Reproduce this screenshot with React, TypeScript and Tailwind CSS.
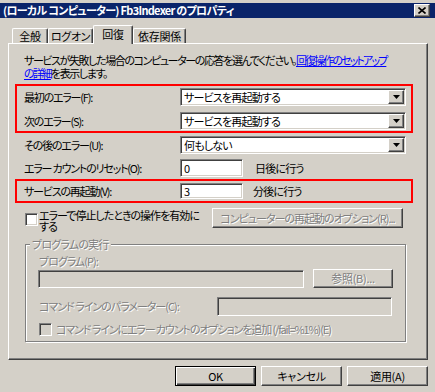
import React from "react";

const raised =
  "border border-white border-r-[#404040] border-b-[#404040] shadow-[inset_-1px_-1px_0_#808080]";
const sunken =
  "border border-[#808080] border-r-white border-b-white shadow-[inset_1px_1px_0_#404040,inset_-1px_-1px_0_#d4d0c8]";
const dim = "text-[#808080] [text-shadow:1px_1px_0_#fff]";
const lbl = "w-[156px] whitespace-nowrap tracking-[-1.2px]";

const Combo = ({ value }: { value: string }) => (
  <div className={`${sunken} bg-white w-[226px] h-[18px] flex items-center justify-between pl-[3px] pr-[1px]`}>
    <span>{value}</span>
    <div className={`${raised} bg-[#d4d0c8] w-[16px] h-[14px] flex items-center justify-center`}>
      <svg width="7" height="4" viewBox="0 0 7 4">
        <path d="M0 0h7L3.5 4z" fill="#000" />
      </svg>
    </div>
  </div>
);

const Field = ({ value, className = "" }: { value?: string; className?: string }) => (
  <div className={`${sunken} flex items-center pl-[3px] ${className}`}>{value}</div>
);

const Check = ({ disabled }: { disabled?: boolean }) => (
  <div className={`${sunken} w-[13px] h-[13px] shrink-0 ${disabled ? "bg-[#d4d0c8]" : "bg-white"}`} />
);

const Tab = ({ label, active, w }: { label: string; active?: boolean; w: string }) => (
  <div
    className={`${w} flex items-center justify-center whitespace-nowrap border-l border-t border-white border-r border-r-[#404040] rounded-t-[2px] shadow-[inset_-1px_0_0_#808080] bg-[#d4d0c8] ${
      active ? "h-[19px] relative z-10 -mb-[1px] pb-[2px]" : "h-[15px]"
    }`}
  >
    {label}
  </div>
);

export default function App() {
  return (
    <div className="w-[435px] h-[392px] bg-[#d4d0c8] overflow-hidden text-[11px] leading-[13px] tracking-[-0.8px] text-black font-['Noto_Sans_CJK_JP',sans-serif] [font-feature-settings:'palt']">
      <div className="pt-[3px]">
        <div className="h-[15px] bg-[#0a246a] flex items-center justify-between pl-[3px] pr-[5px]">
          <span className="text-white font-bold tracking-[-0.7px]">(ローカル コンピューター) Fb3Indexer のプロパティ</span>
          <div className={`${raised} bg-[#d4d0c8] w-[16px] h-[13px] flex items-center justify-center`}>
            <svg width="8" height="7" viewBox="0 0 8 7">
              <path d="M0.5 0.5l7 6M7.5 0.5l-7 6" stroke="#000" strokeWidth="1.6" />
            </svg>
          </div>
        </div>
      </div>

      <div className="mt-[7px] pl-[12px] flex items-end h-[18px] tracking-[-0.3px]">
        <Tab label="全般" w="w-[36px]" />
        <Tab label="ログオン" w="w-[45px]" />
        <Tab label="回復" w="w-[40px]" active />
        <Tab label="依存関係" w="w-[53px]" />
      </div>

      <div className="ml-[8px] w-[420px] h-[317px] border border-white border-r-[#404040] border-b-[#404040] shadow-[inset_-1px_-1px_0_#808080] flex flex-col">
        <p className="mt-[10px] pl-[15px] whitespace-nowrap tracking-[-1.4px]">
          サービスが失敗した場合のコンピューターの応答を選んでください。
          <span className="text-[#0000ff] underline tracking-[-1.9px]">
            回復操作のセットアップ
            <br />
            の詳細
          </span>
          を表示します。
        </p>

        <div className="mt-[4px] ml-[6px] w-[398px] border-2 border-[#ff0000] pt-[2px] pb-[1px] pl-[7px] flex flex-col gap-[6px]">
          <div className="flex items-center">
            <span className={lbl}>最初のエラー(F):</span>
            <Combo value="サービスを再起動する" />
          </div>
          <div className="flex items-center">
            <span className={lbl}>次のエラー(S):</span>
            <Combo value="サービスを再起動する" />
          </div>
        </div>

        <div className="mt-[3px] pl-[15px] flex items-center">
          <span className={lbl}>その後のエラー(U):</span>
          <Combo value="何もしない" />
        </div>

        <div className="mt-[5px] pl-[15px] flex items-center">
          <span className={lbl}>エラー カウントのリセット(O):</span>
          <Field value="0" className="w-[63px] h-[18px] bg-white" />
          <span className="ml-[12px]">日後に行う</span>
        </div>

        <div className="mt-[2px] ml-[6px] w-[398px] border-2 border-[#ff0000] py-[2px] pl-[7px] flex items-center">
          <span className={lbl}>サービスの再起動(V):</span>
          <Field value="3" className="w-[63px] h-[16px] bg-white" />
          <span className="ml-[10px]">分後に行う</span>
        </div>

        <div className="mt-[5px] pl-[16px] flex items-start">
          <div className="pt-[5px]">
            <Check />
          </div>
          <span className="ml-[1px] w-[173px] whitespace-nowrap pt-[2px] leading-[11px] tracking-[-1px]">
            エラーで停止したときの操作を有効に
            <br />
            する
          </span>
          <button className={`${raised} w-[191px] h-[20px] bg-[#d4d0c8] whitespace-nowrap tracking-[-1px] ${dim}`}>
            コンピューターの再起動のオプション(R)...
          </button>
        </div>

        <fieldset className="mt-[6px] ml-[16px] w-[380px] h-[104px] border border-[#808080] shadow-[inset_1px_1px_0_#fff,1px_1px_0_#fff] pl-[13px] pr-[12px]">
          <legend className={`ml-[-9px] px-[2px] bg-[#d4d0c8] ${dim}`}>プログラムの実行</legend>
          <div className={`mt-[4px] tracking-[-1px] ${dim}`}>プログラム(P):</div>
          <div className="mt-[1px] -ml-[1px] flex items-center">
            <Field className="w-[266px] h-[18px] bg-[#d4d0c8]" />
            <button className={`${raised} ml-[9px] w-[80px] h-[19px] bg-[#d4d0c8] tracking-[-0.3px] ${dim}`}>
              参照(B)...
            </button>
          </div>
          <div className="mt-[9px] flex items-center">
            <span className={`w-[178px] whitespace-nowrap tracking-[-1px] ${dim}`}>コマンド ラインのパラメーター(C):</span>
            <Field className="w-[175px] h-[19px] bg-[#d4d0c8]" />
          </div>
          <div className="mt-[7px] flex items-center">
            <Check disabled />
            <span className={`ml-[4px] whitespace-nowrap tracking-[-1.1px] ${dim}`}>
              コマンド ラインにエラー カウントのオプションを追加 (/fail=%1%)(E)
            </span>
          </div>
        </fieldset>
      </div>

      <div className="mt-[6px] pl-[175px] flex gap-[5px] tracking-[-0.3px]">
        <button className="w-[81px] h-[20px] bg-[#d4d0c8] border border-black shadow-[inset_1px_1px_0_#fff,inset_-1px_-1px_0_#404040,inset_-2px_-2px_0_#808080]">
          OK
        </button>
        <button className={`${raised} w-[81px] h-[20px] bg-[#d4d0c8]`}>キャンセル</button>
        <button className={`${raised} w-[81px] h-[20px] bg-[#d4d0c8]`}>適用(A)</button>
      </div>
    </div>
  );
}
